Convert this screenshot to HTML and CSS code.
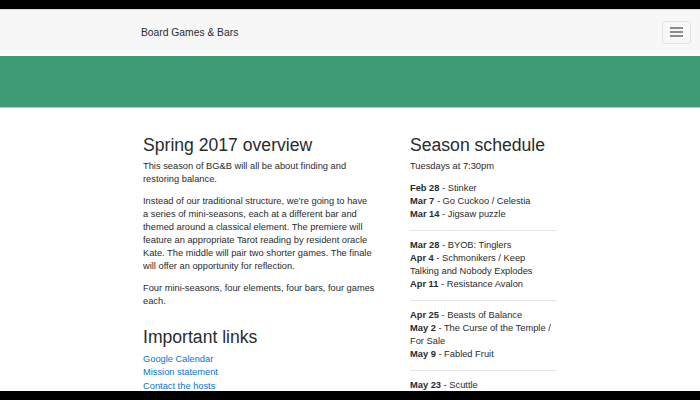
FILE: index.html
```html
<!DOCTYPE html>
<html lang="en">
<head>
<meta charset="utf-8">
<title>Board Games &amp; Bars</title>
<link rel="stylesheet" href="styles.css">
</head>
<body>
<div class="page">
  <div class="letterbox"></div>
  <nav class="navbar">
    <span class="brand">Board Games &amp; Bars</span>
    <button class="toggler" type="button" aria-label="Toggle navigation">
      <span class="bar"></span><span class="bar"></span><span class="bar"></span>
    </button>
  </nav>
  <header class="hero"></header>
  <main class="content">
    <section class="col-main">
      <h2>Spring 2017 overview</h2>
      <p>This season of BG&amp;B will all be about finding and restoring balance.</p>
      <p>Instead of our traditional structure, we’re going to have a&nbsp;series of mini-seasons, each at a different bar and themed around a classical element. The premiere will feature an appropriate Tarot reading by resident oracle Kate. The middle will pair two shorter games. The finale will offer an opportunity for reflection.</p>
      <p>Four mini-seasons, four elements, four bars, four games each.</p>
      <h2 class="links-title">Important links</h2>
      <ul class="links">
        <li><a href="#">Google Calendar</a></li>
        <li><a href="#">Mission statement</a></li>
        <li><a href="#">Contact the hosts</a></li>
      </ul>
    </section>
    <aside class="col-side">
      <h2>Season schedule</h2>
      <p>Tuesdays at 7:30pm</p>
      <p class="games"><b>Feb 28</b> - Stinker<br><b>Mar 7</b> - Go Cuckoo / Celestia<br><b>Mar 14</b> - Jigsaw puzzle</p>
      <hr>
      <p class="games"><b>Mar 28</b> - BYOB: Tinglers<br><b>Apr 4</b> - Schmonikers / Keep Talking and Nobody Explodes<br><b>Apr 11</b> - Resistance Avalon</p>
      <hr>
      <p class="games"><b>Apr 25</b> - Beasts of Balance<br><b>May 2</b> - The Curse of the Temple / For Sale<br><b>May 9</b> - Fabled Fruit</p>
      <hr>
      <p class="games"><b>May 23</b> - Scuttle</p>
    </aside>
  </main>
  <div class="letterbox"></div>
</div>
</body>
</html>
```

FILE: styles.css
```css
html, body {
  margin: 0;
  padding: 0;
  background: #000;
}

.page {
  width: 700px;
  height: 400px;
  display: flex;
  flex-direction: column;
  overflow: hidden;
  background: #fff;
  font-family: "Liberation Sans", Arial, sans-serif;
  color: #292b2c;
}

.letterbox {
  height: 9px;
  flex-shrink: 0;
  background: #000;
}

.navbar {
  flex-shrink: 0;
  height: 44px;
  border-top: 1px solid #d9d9d9;
  border-bottom: 2px solid #fff;
  background: #f7f7f7;
  display: flex;
  align-items: center;
  justify-content: space-between;
  padding: 0 9px 0 141px;
}

.brand {
  font-size: 10.3px;
  color: #292b2c;
}

.toggler {
  width: 29px;
  height: 23px;
  box-sizing: border-box;
  border: 1px solid rgba(0, 0, 0, 0.08);
  border-radius: 3px;
  background: transparent;
  padding: 0;
  display: flex;
  flex-direction: column;
  align-items: center;
  justify-content: center;
  gap: 2.5px;
}

.toggler .bar {
  display: block;
  width: 13px;
  height: 1.5px;
  background: #8c8c8c;
}

.hero {
  flex-shrink: 0;
  height: 51px;
  background: #3d9c76;
  border-bottom: 1px solid #a3d3bd;
}

.content {
  flex: 1;
  min-height: 0;
  overflow: hidden;
  display: flex;
  align-items: flex-start;
  padding: 28px 0 0 143px;
  font-size: 9.3px;
  line-height: 13px;
}

.col-main {
  width: 234px;
  margin-right: 33px;
}

.col-side {
  width: 147px;
}

.col-side .games {
  margin: 0 4px 8.5px 0;
}

h2 {
  font-size: 17.6px;
  font-weight: normal;
  line-height: 19.8px;
  margin: 0 0 4.5px;
}

p {
  margin: 0 0 9px;
}

b {
  font-weight: bold;
}

.links-title {
  margin-top: 20px;
}

.links {
  list-style: none;
  margin: 0;
  padding: 0;
  line-height: 13.5px;
}

.links a {
  color: #0275d8;
  text-decoration: none;
}

hr {
  border: 0;
  border-top: 1px solid #e6e6e6;
  margin: 0 0 8.5px;
}
```
